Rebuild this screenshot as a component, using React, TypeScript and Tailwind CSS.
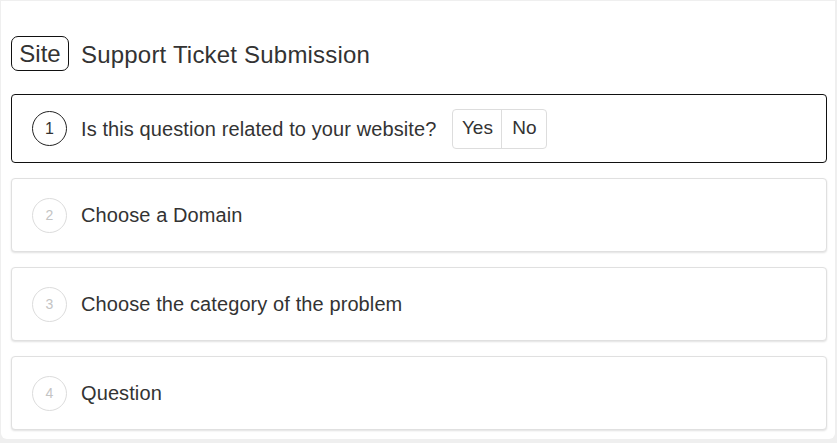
import React from "react";

const font = { fontFamily: '"Liberation Sans", Arial, Helvetica, sans-serif' };

function Step({ n, label, active, children }: { n: number; label: string; active?: boolean; children?: React.ReactNode }) {
  return (
    <div
      className={
        active
          ? "flex items-center w-[816px] h-[69px] border border-[#111] rounded-[4px] bg-white pl-[20px]"
          : "flex items-center w-[816px] h-[74px] border border-[#e0e0e0] rounded-[4px] bg-white pl-[20px] shadow-[0_1px_2px_rgba(0,0,0,0.12)]"
      }
    >
      <div
        className={
          active
            ? "flex items-center justify-center w-[35px] h-[35px] rounded-full border border-[#222] text-[16px] text-[#333]"
            : "flex items-center justify-center w-[35px] h-[35px] rounded-full border border-[#dcdcdc] text-[14px] text-[#c4c4c4]"
        }
      >
        {n}
      </div>
      <div className="ml-[14px] text-[20px] tracking-[0.1px] text-[#333]">{label}</div>
      {children}
    </div>
  );
}

export default function App() {
  return (
    <div className="w-[837px] h-[443px] bg-[#efefef] pt-px pl-px" style={font}>
      <div className="w-[834px] h-[438px] bg-white rounded-b-[6px] pl-[10px] pt-[35px]">
        <div className="flex items-center h-[35px]">
          <div className="h-[35px] w-[58px] flex items-center justify-center border border-[#111] rounded-[7px] text-[24px] leading-none text-[#333]">
            Site
          </div>
          <div className="ml-[12px] pt-[3px] text-[24px] leading-none tracking-[0.2px] text-[#333]">Support Ticket Submission</div>
        </div>
        <div className="mt-[23px] flex flex-col gap-[15px]">
          <Step n={1} label="Is this question related to your website?" active>
            <div className="ml-[16px] flex h-[40px] border border-[#ddd] rounded-[4px] text-[19px] text-[#333]">
              <div className="w-[49px] flex items-center justify-center border-r border-[#ddd]">Yes</div>
              <div className="w-[44px] flex items-center justify-center">No</div>
            </div>
          </Step>
          <Step n={2} label="Choose a Domain" />
          <Step n={3} label="Choose the category of the problem" />
          <Step n={4} label="Question" />
        </div>
      </div>
    </div>
  );
}
